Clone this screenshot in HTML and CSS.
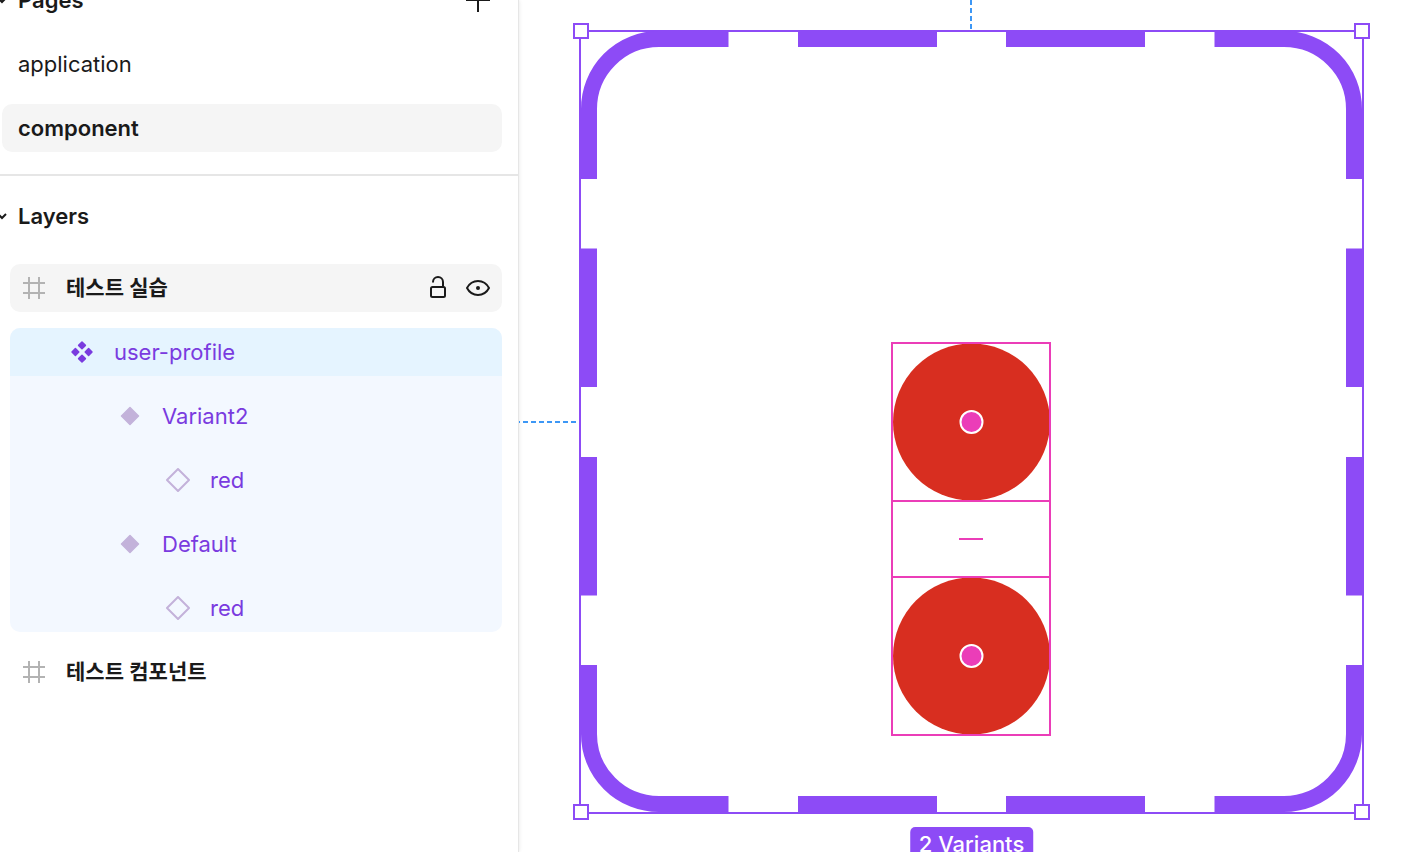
FILE: index.html
```html
<!DOCTYPE html>
<html lang="ko">
<head>
    <meta charset="UTF-8">
    <meta name="viewport" content="width=device-width, initial-scale=1.0">
    <title>component</title>
    <link rel="stylesheet" href="styles.css">
</head>
<body>
    <aside class="sidebar">
        <section class="pages">
            <div class="section-header">
                <button class="section-toggle">
                    <svg class="chevron" width="12" height="12" viewBox="0 0 12 12"><path d="M2 4l4 4 4-4"/></svg>
                    Pages
                </button>
                <button class="icon-button" aria-label="Add page">
                    <svg width="24" height="24" viewBox="0 0 24 24"><path d="M12 0v24M0 12h24"/></svg>
                </button>
            </div>
            <button class="page-item">application</button>
            <button class="page-item current">component</button>
        </section>

        <section class="layers">
            <div class="section-header">
                <button class="section-toggle">
                    <svg class="chevron" width="12" height="12" viewBox="0 0 12 12"><path d="M2 4l4 4 4-4"/></svg>
                    Layers
                </button>
            </div>
            <ul class="layer-list">
                <li class="layer frame hovered">
                    <svg class="hash" width="24" height="24" viewBox="0 0 24 24"><path d="M7 1v22M17 1v22M1 7h22M1 17h22"/></svg>
                    <span class="layer-name">테스트 실습</span>
                    <button class="icon-button" aria-label="Lock">
                        <svg width="24" height="24" viewBox="0 0 24 24"><rect x="5" y="11" width="14" height="10" rx="1.5"/><path d="M7 6.5V6a5 5 0 0 1 10 0v5"/></svg>
                    </button>
                    <button class="icon-button" aria-label="Hide">
                        <svg width="24" height="24" viewBox="0 0 24 24"><path d="M1 12c2.500-4.700 6.500-7 11-7s8.500 2.300 11 7c-2.500 4.700-6.500 7-11 7s-8.500-2.300-11-7z"/><circle class="solid" cx="12" cy="12" r="2"/></svg>
                    </button>
                </li>
                <li>
                    <ul class="component-group">
                        <li class="layer level-1 selected">
                            <svg width="24" height="24" viewBox="0 0 24 24"><path class="component" d="M12 2l3.400 3.400-3.400 3.400-3.400-3.400zM5.400 8.600l3.400 3.400-3.400 3.400-3.400-3.400zM18.600 8.600l3.400 3.400-3.400 3.400-3.400-3.400zM12 15.200l3.400 3.400-3.400 3.400-3.400-3.400z"/></svg>
                            <span class="layer-name">user-profile</span>
                        </li>
                        <li class="layer level-2">
                            <svg width="24" height="24" viewBox="0 0 24 24"><path class="variant" d="M12 3.500l8.500 8.500-8.500 8.500L3.500 12z"/></svg>
                            <span class="layer-name">Variant2</span>
                        </li>
                        <li class="layer level-3">
                            <svg width="24" height="24" viewBox="0 0 24 24"><path class="instance" d="M12 1l11 11-11 11L1 12z"/></svg>
                            <span class="layer-name">red</span>
                        </li>
                        <li class="layer level-2">
                            <svg width="24" height="24" viewBox="0 0 24 24"><path class="variant" d="M12 3.500l8.500 8.500-8.500 8.500L3.500 12z"/></svg>
                            <span class="layer-name">Default</span>
                        </li>
                        <li class="layer level-3">
                            <svg width="24" height="24" viewBox="0 0 24 24"><path class="instance" d="M12 1l11 11-11 11L1 12z"/></svg>
                            <span class="layer-name">red</span>
                        </li>
                    </ul>
                </li>
                <li class="layer frame">
                    <svg class="hash" width="24" height="24" viewBox="0 0 24 24"><path d="M7 1v22M17 1v22M1 7h22M1 17h22"/></svg>
                    <span class="layer-name">테스트 컴포넌트</span>
                </li>
            </ul>
        </section>
    </aside>

    <main class="canvas">
        <!-- distance guides -->
        <svg class="guide guide-top" width="2" height="30"><path d="M1 0v30"/></svg>
        <svg class="guide guide-left" width="60" height="2"><path d="M-4 1h61"/></svg>

        <!-- selected component set -->
        <div class="component-set">
            <svg class="dashes" width="781" height="781" viewBox="0 0 781 781">
                <path d="M147.500 8H78A70 70 0 0 0 8 78v70M633.500 8H703a70 70 0 0 1 70 70v70M8 634v69a70 70 0 0 0 70 70h69.500M773 634v69a70 70 0 0 1-70 70h-69.500"/>
                <path d="M217 8h139M425 8h139M217 773h139M425 773h139M8 217.500v138.500M8 426v138.500M773 217.500v138.500M773 426v138.500"/>
            </svg>
            <span class="handle top left"></span>
            <span class="handle top right"></span>
            <span class="handle bottom left"></span>
            <span class="handle bottom right"></span>

            <div class="variants">
                <svg class="variant-box" width="160" height="160" viewBox="0 0 156 156">
                    <circle class="red" cx="78.500" cy="78" r="78.500"/>
                    <circle class="dot" cx="78.500" cy="78" r="11"/>
                </svg>
                <div class="spacing"></div>
                <svg class="variant-box" width="160" height="160" viewBox="0 0 156 156">
                    <circle class="red" cx="78.500" cy="78" r="78.500"/>
                    <circle class="dot" cx="78.500" cy="78" r="11"/>
                </svg>
            </div>

            <span class="badge">2 Variants</span>
        </div>
    </main>
</body>
</html>
```

FILE: styles.css
```css
* {
    box-sizing: border-box;
}
body {
    display: flex;
    height: 100vh;
    margin: 0;
    overflow: hidden;
    background: #fff;
    color: #1a1a1a;
    font-family: Inter, "Noto Sans CJK KR", sans-serif;
    font-size: 22px;
    line-height: 32px;
}
button {
    padding: 0;
    border: none;
    background: none;
    color: inherit;
    font: inherit;
    text-align: left;
    cursor: pointer;
}
ul {
    margin: 0;
    padding: 0;
    list-style: none;
}
svg {
    display: block;
    flex: none;
    fill: none;
    stroke: #1a1a1a;
    stroke-width: 2;
}

/* sidebar */
.sidebar {
    flex: none;
    width: 519px;
    border-right: 1px solid #e6e6e6;
    box-shadow: 0 0 4px rgba(0, 0, 0, 0.1);
}
.pages,
.layers {
    display: flex;
    flex-direction: column;
    gap: 16px;
}
.pages {
    margin-top: -24px;
    padding-bottom: 22px;
    border-bottom: 2px solid #e6e6e6;
}
.layers {
    padding-top: 16px;
}
.section-header {
    display: flex;
    align-items: center;
    justify-content: space-between;
    height: 48px;
    padding-right: 28px;
}
.section-toggle {
    display: flex;
    align-items: center;
    gap: 10px;
    margin-left: -4px;
    font-weight: 600;
}
.page-item {
    height: 48px;
    margin: 0 16px 0 2px;
    padding: 0 16px;
    border-radius: 10px;
}
.page-item.current {
    background: #f5f5f5;
    font-weight: 600;
}
.icon-button svg {
    stroke-linejoin: round;
}
.layer-list {
    display: flex;
    flex-direction: column;
    gap: 16px;
    padding: 8px 16px 0 10px;
}
.layer {
    display: flex;
    align-items: center;
    gap: 16px;
    height: 48px;
    padding: 0 12px;
    border-radius: 10px;
}
.layer-name {
    flex: 1;
    padding-left: 4px;
}
.frame {
    font-size: 21px;
    font-weight: 600;
}
.hovered {
    background: #f5f5f5;
}
.hash {
    stroke: #b3b3b3;
}
.solid {
    fill: #1a1a1a;
    stroke: none;
}

.component-group {
    display: flex;
    flex-direction: column;
    gap: 16px;
    border-radius: 10px;
    background: #f3f8ff;
    color: #7a3bdf;
}
.selected {
    border-radius: 10px 10px 0 0;
    background: #e5f4ff;
}
.level-1 {
    padding-left: 60px;
}
.level-2 {
    padding-left: 108px;
}
.level-3 {
    padding-left: 156px;
}
.component {
    fill: #7a3bdf;
    stroke: #7a3bdf;
    stroke-width: 1.5;
    stroke-linejoin: round;
}
.variant {
    fill: #c3b2da;
    stroke: #c3b2da;
    stroke-width: 1.5;
    stroke-linejoin: round;
}
.instance {
    stroke: #c3b2da;
    stroke-linejoin: round;
}

/* canvas */
.canvas {
    position: relative;
    flex: 1;
    overflow: hidden;
}
.guide {
    position: absolute;
    stroke: #3d97f5;
    stroke-dasharray: 5 3;
}
.guide-top {
    top: 0;
    left: 451px;
}
.guide-left {
    top: 421px;
    left: 0;
}
.component-set {
    position: absolute;
    top: 30px;
    left: 60px;
    width: 785px;
    height: 784px;
    border: 2px solid #8d4bf6;
}
.dashes {
    position: absolute;
    top: -1px;
    left: 0;
    stroke: #8d4bf6;
    stroke-width: 16;
}
.handle {
    position: absolute;
    width: 16px;
    height: 16px;
    border: 2px solid #8d4bf6;
    background: #fff;
}
.top {
    top: -9px;
}
.bottom {
    bottom: -8px;
}
.left {
    left: -8px;
}
.right {
    right: -8px;
}
.variants {
    position: absolute;
    top: 310px;
    left: 310px;
    width: 160px;
}
.variant-box {
    border: 2px solid #eb3db8;
}
.red {
    fill: #d82e20;
    stroke: none;
}
.dot {
    fill: #eb3db8;
    stroke: #fff;
}
.spacing {
    display: flex;
    align-items: center;
    justify-content: center;
    height: 74px;
    border: solid #eb3db8;
    border-width: 0 2px;
}
.spacing::before {
    content: "";
    width: 24px;
    height: 2px;
    background: #eb3db8;
}
.badge {
    position: absolute;
    top: 795px;
    left: 50%;
    padding: 1px 9px;
    border-radius: 5px;
    background: #8d4bf6;
    color: #fff;
    font-weight: 500;
    white-space: nowrap;
    transform: translateX(-50%);
}
```
